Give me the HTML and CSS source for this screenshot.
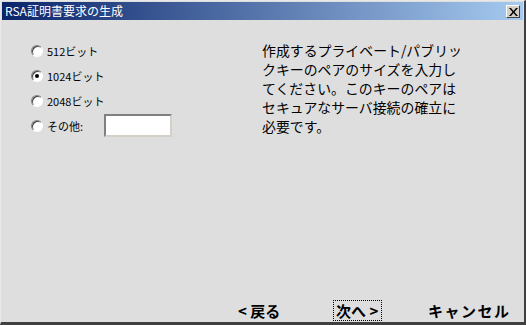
FILE: index.html
```html
<!DOCTYPE html>
<html lang="ja">
<head>
    <meta charset="UTF-8">
    <title>RSA証明書要求の生成</title>
<link rel="stylesheet" href="styles.css">
</head>
<body>
    <div class="window">
        <div class="titlebar">
            <span class="title">RSA証明書要求の生成</span>
            <span class="close">
                <svg width="9" height="8" viewBox="0 0 9 8"><path d="M0 0h2l2.5 3 2.5-3h2l-3.5 4 3.5 4h-2l-2.5-3-2.5 3h-2l3.5-4z" fill="#000"/></svg>
            </span>
        </div>
        <div class="content">
            <div class="main">
                <div class="options">
                    <label class="option"><input type="radio" name="size"> 512ビット</label>
                    <label class="option"><input type="radio" name="size" checked> 1024ビット</label>
                    <label class="option"><input type="radio" name="size"> 2048ビット</label>
                    <label class="option"><input type="radio" name="size"> その他:
                        <input class="other" type="text">
                    </label>
                </div>
                <p class="help">作成するプライベート/パブリッ<br>クキーのペアのサイズを入力し<br>てください。このキーのペアは<br>セキュアなサーバ接続の確立に<br>必要です。</p>
            </div>
            <div class="buttons">
                <button class="back">&lt; 戻る</button>
                <button class="next">次へ &gt;</button>
                <button class="cancel">キャンセル</button>
            </div>
        </div>
    </div>
</body>
</html>
```
FILE: styles.css
```css
body {
    margin: 0;
    width: 526px;
    height: 325px;
    background: #dedede;
    font-family: "Noto Sans CJK JP", "DejaVu Sans", sans-serif;
}

.window {
    width: 526px;
    height: 325px;
    box-sizing: border-box;
    display: flex;
    flex-direction: column;
    background: #dedede;
    border-style: solid;
    border-width: 1px 2px 3px 1px;
    border-color: #e8e8e8 #404040 #404040 #e8e8e8;
    padding: 1px 1px 0 1px;
}

.titlebar {
    height: 18px;
    display: flex;
    align-items: center;
    justify-content: space-between;
    padding: 0 3px 0 3px;
    background: linear-gradient(to right, #0a246a, #a6caf0);
    color: #fff;
}

.title {
    font-size: 12px;
    line-height: 18px;
}

.close {
    width: 14px;
    height: 13px;
    box-sizing: border-box;
    display: flex;
    align-items: center;
    justify-content: center;
    background: #d4d0c8;
    border: 1px solid;
    border-color: #fff #404040 #404040 #fff;
    margin-top: 1px;
}

.content {
    flex: 1;
    display: flex;
    flex-direction: column;
    justify-content: space-between;
}

.main {
    display: flex;
}

.options {
    width: 231px;
    padding: 20px 0 0 29px;
    display: flex;
    flex-direction: column;
    gap: 4px;
}

.option {
    display: flex;
    align-items: center;
    height: 21px;
    font-size: 11px;
    color: #000;
}

.option input[type=radio] {
    appearance: none;
    width: 12px;
    height: 12px;
    margin: 0 4px 0 0;
    border-radius: 50%;
    background: #fff;
    border: 1px solid;
    border-color: #808080 #fff #fff #808080;
    box-shadow: inset 1px 1px 0 #404040;
    position: relative;
}

.option input[type=radio]:checked::after {
    content: "";
    position: absolute;
    left: 3px;
    top: 3px;
    width: 4px;
    height: 4px;
    border-radius: 50%;
    background: #000;
}

.other {
    width: 68px;
    height: 23px;
    box-sizing: border-box;
    margin-left: 21px;
    margin-top: 0;
    background: #fff;
    border: 2px solid;
    border-color: #808080 #d4d0c8 #d4d0c8 #808080;
    padding: 0;
}

.help {
    margin: 21px 0 0 0;
    font-size: 13.9px;
    line-height: 19px;
    color: #000;
    white-space: nowrap;
}

.buttons {
    display: flex;
    padding-left: 233px;
    height: 21px;
    margin-bottom: 1px;
}

.buttons button {
    height: 21px;
    padding: 0 2px;
    border: 1px dotted transparent;
    background: none;
    font-family: inherit;
    font-size: 15px;
    font-weight: bold;
    text-align: left;
    line-height: 19px;
    color: #000;
    white-space: nowrap;
}

.buttons .back {
    width: 98px;
}

.buttons .next {
    width: 49px;
    margin-right: 43px;
    border-color: #000;
}

.buttons .cancel {
    letter-spacing: 1.5px;
}
```
